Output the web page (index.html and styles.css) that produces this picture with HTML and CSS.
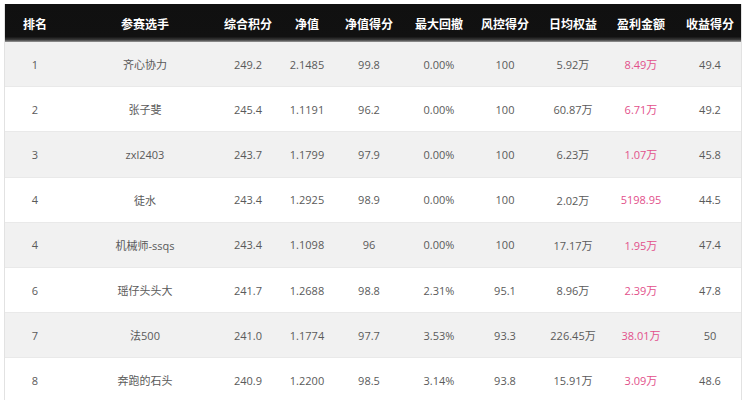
FILE: index.html
```html
<!DOCTYPE html>
<html lang="zh-CN">
<head>
<meta charset="utf-8">
<title>排名</title>
<link rel="stylesheet" href="styles.css">
</head>
<body>
<div class="board">
  <div class="row head">
    <div class="cell">排名</div>
    <div class="cell">参赛选手</div>
    <div class="cell">综合积分</div>
    <div class="cell">净值</div>
    <div class="cell">净值得分</div>
    <div class="cell">最大回撤</div>
    <div class="cell">风控得分</div>
    <div class="cell">日均权益</div>
    <div class="cell">盈利金额</div>
    <div class="cell">收益得分</div>
  </div>
  <div class="row">
    <div class="cell">1</div><div class="cell">齐心协力</div><div class="cell">249.2</div><div class="cell">2.1485</div><div class="cell">99.8</div><div class="cell">0.00%</div><div class="cell">100</div><div class="cell">5.92万</div><div class="cell pink">8.49万</div><div class="cell">49.4</div>
  </div>
  <div class="row">
    <div class="cell">2</div><div class="cell">张子斐</div><div class="cell">245.4</div><div class="cell">1.1191</div><div class="cell">96.2</div><div class="cell">0.00%</div><div class="cell">100</div><div class="cell">60.87万</div><div class="cell pink">6.71万</div><div class="cell">49.2</div>
  </div>
  <div class="row">
    <div class="cell">3</div><div class="cell">zxl2403</div><div class="cell">243.7</div><div class="cell">1.1799</div><div class="cell">97.9</div><div class="cell">0.00%</div><div class="cell">100</div><div class="cell">6.23万</div><div class="cell pink">1.07万</div><div class="cell">45.8</div>
  </div>
  <div class="row">
    <div class="cell">4</div><div class="cell">徒水</div><div class="cell">243.4</div><div class="cell">1.2925</div><div class="cell">98.9</div><div class="cell">0.00%</div><div class="cell">100</div><div class="cell">2.02万</div><div class="cell pink">5198.95</div><div class="cell">44.5</div>
  </div>
  <div class="row">
    <div class="cell">4</div><div class="cell">机械师-ssqs</div><div class="cell">243.4</div><div class="cell">1.1098</div><div class="cell">96</div><div class="cell">0.00%</div><div class="cell">100</div><div class="cell">17.17万</div><div class="cell pink">1.95万</div><div class="cell">47.4</div>
  </div>
  <div class="row">
    <div class="cell">6</div><div class="cell">瑶仔头头大</div><div class="cell">241.7</div><div class="cell">1.2688</div><div class="cell">98.8</div><div class="cell">2.31%</div><div class="cell">95.1</div><div class="cell">8.96万</div><div class="cell pink">2.39万</div><div class="cell">47.8</div>
  </div>
  <div class="row">
    <div class="cell">7</div><div class="cell">法500</div><div class="cell">241.0</div><div class="cell">1.1774</div><div class="cell">97.7</div><div class="cell">3.53%</div><div class="cell">93.3</div><div class="cell">226.45万</div><div class="cell pink">38.01万</div><div class="cell">50</div>
  </div>
  <div class="row">
    <div class="cell">8</div><div class="cell">奔跑的石头</div><div class="cell">240.9</div><div class="cell">1.2200</div><div class="cell">98.5</div><div class="cell">3.14%</div><div class="cell">93.8</div><div class="cell">15.91万</div><div class="cell pink">3.09万</div><div class="cell">48.6</div>
  </div>
</div>
</body>
</html>
```
FILE: styles.css
```css
html, body {
  margin: 0;
  padding: 0;
  background: #ffffff;
}

body {
  font-family: "Open Sans", "Noto Sans CJK SC", sans-serif;
  font-size: 11px;
  color: #5a5a5a;
}

.board {
  margin: 4px 0 0 4px;
  width: 736px;
  border-left: 1px solid #e2e2e2;
  border-right: 1px solid #e2e2e2;
}

.row {
  display: grid;
  grid-template-columns: 60px 160px 46px 72px 52px 88px 44px 92px 44px 78px;
  height: 45.2px;
  align-items: center;
  box-sizing: border-box;
  border-bottom: 1px solid #e9e9e9;
}

.row:nth-child(even) {
  background: #f1f1f1;
}

.row.head {
  height: 38px;
  background: linear-gradient(#101010 0, #111111 86%, #3a3a3a 94%, #9a9a9a 100%);
  color: #ffffff;
  font-family: "Noto Sans CJK SC", sans-serif;
  font-weight: 700;
  font-size: 12px;
  border-bottom: none;
}

.cell {
  display: flex;
  justify-content: center;
  white-space: nowrap;
  min-width: 0;
}

.cell:last-child {
  margin-left: 16px;
}

.pink {
  color: #e2508b;
}
```
